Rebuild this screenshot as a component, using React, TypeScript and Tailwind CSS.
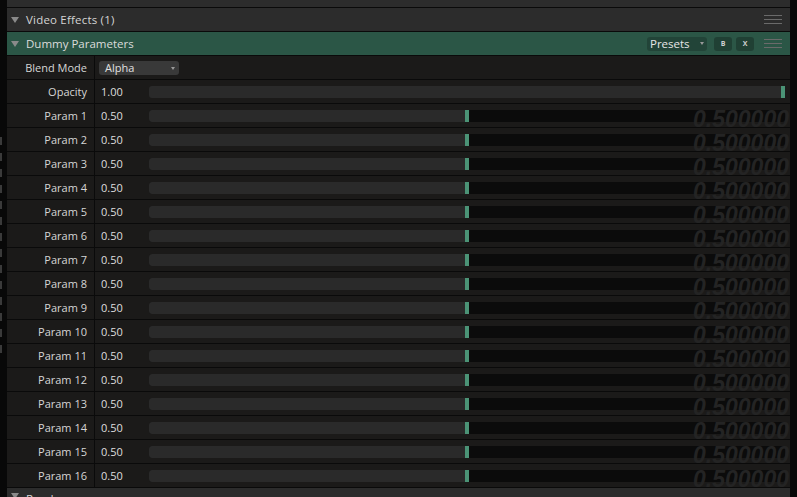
import React from "react";

const params = Array.from({ length: 16 }, (_, i) => `Param ${i + 1}`);

function Triangle() {
    return (
        <svg width="8" height="6" viewBox="0 0 8 6" className="shrink-0">
            <path d="M0 0 H8 L4 6 Z" fill="#8a8a8a" />
        </svg>
    );
}

function Burger() {
    return (
        <div className="flex flex-col gap-[3px] w-[18px]">
            <div className="h-px bg-[#6a6a6a]" />
            <div className="h-px bg-[#6a6a6a]" />
            <div className="h-px bg-[#6a6a6a]" />
        </div>
    );
}

function Row({ label, children }: { label: string; children: React.ReactNode }) {
    return (
        <div className="flex h-[24px] shrink-0 border-b border-[#0a0a0a] bg-[#1b1a19]">
            <div className="w-[88px] shrink-0 border-r border-[#0a0a0a] flex items-center justify-end pr-[7px] text-[#d6d6d6]">{label}</div>
            <div className="flex-1 relative flex items-center">{children}</div>
        </div>
    );
}

export default function App() {
    return (
        <div className="w-[797px] h-[497px] bg-[#080808] flex overflow-hidden text-[11px] leading-none" style={{ fontFamily: '"Open Sans", "DejaVu Sans", sans-serif' }}>
            <div className="w-[7px] shrink-0 flex flex-col pt-[137px] gap-[8px]">
                {Array.from({ length: 14 }, (_, i) => (
                    <div key={i} className="w-[2px] h-[8px] bg-[#3a3a3a]" />
                ))}
            </div>
            <div className="flex-1 flex flex-col">
                <div className="h-[8px] shrink-0 bg-[#2c2c2c] border-b border-[#0a0a0a]" />
                <div className="h-[24px] shrink-0 bg-[#2c2c2c] border-b border-[#0a0a0a] flex items-center pl-[4px] pr-[8px] gap-[7px] text-[#d4d4d4] text-[11.5px]">
                    <Triangle />
                    <span className="flex-1 tracking-[0.2px]">Video Effects (1)</span>
                    <Burger />
                </div>
                <div className="h-[24px] shrink-0 bg-[#2b5646] border-b border-[#0a0a0a] flex items-center pl-[4px] pr-[8px] gap-[7px] text-[#dcdcdc]">
                    <Triangle />
                    <span className="flex-1 text-[11.5px]">Dummy Parameters</span>
                    <div className="w-[60px] h-[14px] rounded-[3px] bg-black/20 flex items-center px-[3px] text-[#e6e6e6] text-[11.5px] relative">
                        Presets
                        <span className="absolute right-[3px] top-[5px] border-x-[2px] border-t-[3px] border-x-transparent border-t-[#999]" />
                    </div>
                    <div className="flex gap-[4px] mr-[3px]">
                        <div className="w-[18px] h-[14px] rounded-[3px] bg-black/25 flex items-center justify-center text-[7px] font-bold text-[#cfcfcf]">B</div>
                        <div className="w-[18px] h-[14px] rounded-[3px] bg-black/25 flex items-center justify-center text-[7px] font-bold text-[#cfcfcf]">X</div>
                    </div>
                    <Burger />
                </div>
                <Row label="Blend Mode">
                    <div className="ml-[4px] w-[80px] h-[14px] rounded-[3px] bg-[#393939] flex items-center px-[6px] text-[#e0e0e0] relative">
                        Alpha
                        <span className="absolute right-[4px] top-[6px] border-x-[2px] border-t-[3px] border-x-transparent border-t-[#999]" />
                    </div>
                </Row>
                <Row label="Opacity">
                    <span className="w-[54px] pl-[6px] text-[#dedede]">1.00</span>
                    <div className="flex-1 mr-[5px] h-[12px] rounded-[3px] bg-[#2a2a2a] flex justify-end">
                        <div className="w-[4px] h-full bg-[#4b9376]" />
                    </div>
                </Row>
                {params.map((p) => (
                    <Row key={p} label={p}>
                        <span className="w-[54px] pl-[6px] text-[#dedede]">0.50</span>
                        <div className="flex-1 mr-[5px] h-[12px] rounded-[3px] bg-[#0b0b0b] flex overflow-hidden">
                            <div className="w-[316px] h-full bg-[#2a2a2a]" />
                            <div className="w-[4px] h-full bg-[#4b9376]" />
                        </div>
                        <span className="absolute right-[1px] top-[4px] text-[23px] font-bold italic text-[#242424]" style={{ fontFamily: '"Liberation Sans", sans-serif' }}>0.500000</span>
                    </Row>
                ))}
                <div className="flex-1 bg-[#2c2c2c] flex items-start pl-[4px] pr-[8px] pt-[5px] gap-[7px] text-[#d4d4d4] text-[11.5px]">
                    <Triangle />
                    <span className="flex-1">Render</span>
                </div>
            </div>
            <div className="w-[7px] shrink-0" />
        </div>
    );
}
